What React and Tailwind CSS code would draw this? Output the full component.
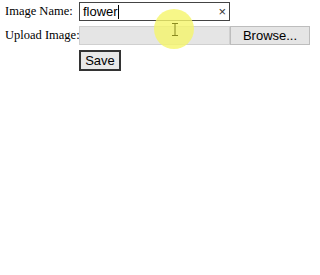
import React from "react";

export default function App() {
  return (
    <div className="relative w-[320px] h-[275px] bg-white text-black" style={{ fontFamily: '"Liberation Serif", serif' }}>
      <div className="pl-[5px] pt-[2px] flex flex-col">
        <div className="flex items-center h-[19px]">
          <span className="w-[74px] shrink-0 whitespace-nowrap text-[12.5px] leading-none">Image Name:</span>
          <div className="flex items-center shrink-0 w-[151px] h-[19px] border border-[#444] px-[3px]" style={{ fontFamily: '"Liberation Sans", sans-serif' }}>
            <span className="text-[13px] leading-none">flower</span>
            <span className="w-px h-[14px] bg-black"></span>
            <span className="ml-auto text-[13px] leading-none text-[#333]">×</span>
          </div>
        </div>
        <div className="flex items-center h-[19px] mt-[5px]">
          <span className="w-[74px] shrink-0 whitespace-nowrap text-[12.5px] leading-none">Upload Image:</span>
          <div className="flex shrink-0 h-[19px] w-[231px]">
            <div className="w-[151px] h-full bg-[#e5e5e5] border border-[#d0d0d0]"></div>
            <div className="w-[80px] h-full bg-[#e5e5e5] border border-[#bdbdbd] flex items-center justify-center text-[13px] leading-none" style={{ fontFamily: '"Liberation Sans", sans-serif' }}>Browse...</div>
          </div>
        </div>
        <div className="mt-[5px] ml-[74px]">
          <div className="w-[42px] h-[21px] bg-[#e8e8e8] border-2 border-[#333] flex items-center justify-center text-[13px] leading-none" style={{ fontFamily: '"Liberation Sans", sans-serif' }}>Save</div>
        </div>
      </div>
      <div className="absolute left-[154px] top-[9px] w-[40px] h-[40px] rounded-full bg-[#f5f56a] opacity-80"></div>
      <svg className="absolute left-[171px] top-[23px]" width="8" height="13" viewBox="0 0 8 13">
        <path d="M1 0.5h6M4 0.5v12M1 12.5h6" stroke="#8a8a20" strokeWidth="1" fill="none" />
      </svg>
    </div>
  );
}
